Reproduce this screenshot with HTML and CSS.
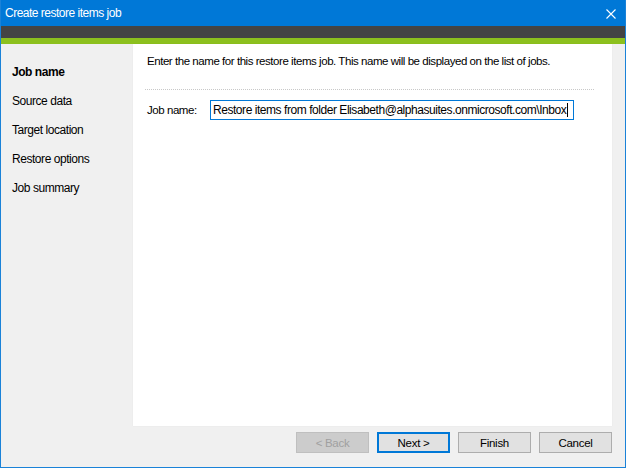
FILE: index.html
```html
<!DOCTYPE html>
<html>
<head>
<meta charset="utf-8">
<link rel="stylesheet" href="styles.css">
</head>
<body>
<div class="window">
  <div class="titlebar">
    <span class="title">Create restore items job</span>
    <svg class="close" width="10" height="10" viewBox="0 0 10 10"><path d="M0.5 0.5 L9.5 9.5 M9.5 0.5 L0.5 9.5" stroke="#fff" stroke-width="1.1" fill="none"/></svg>
  </div>
  <div class="darkbar"></div>
  <div class="greenbar"></div>
  <div class="main">
    <ul class="nav">
      <li class="active">Job name</li>
      <li>Source data</li>
      <li>Target location</li>
      <li>Restore options</li>
      <li>Job summary</li>
    </ul>
    <div class="panel">
      <p class="intro">Enter the name for this restore items job. This name will be displayed on the list of jobs.</p>
      <div class="sep"></div>
      <div class="field">
        <label class="label">Job name:</label>
        <div class="input">Restore items from folder Elisabeth@alphasuites.onmicrosoft.com\Inbox<span class="caret"></span></div>
      </div>
    </div>
  </div>
  <div class="footer">
    <button class="btn disabled">&lt; Back</button>
    <button class="btn default">Next &gt;</button>
    <button class="btn">Finish</button>
    <button class="btn">Cancel</button>
  </div>
</div>
</body>
</html>
```
FILE: styles.css
```css
html, body {
  margin: 0;
  padding: 0;
}
body {
  font-family: "Liberation Sans", Arial, sans-serif;
  font-size: 11.5px;
  letter-spacing: -0.45px;
  color: #000;
}
.window {
  width: 626px;
  height: 468px;
  box-sizing: border-box;
  border: 1px solid #1a82d8;
  border-top: none;
  background: #f0f0f0;
  display: flex;
  flex-direction: column;
  overflow: hidden;
}
.titlebar {
  height: 26px;
  margin: 0 -1px;
  background: #0078d7;
  display: flex;
  align-items: center;
  justify-content: space-between;
  padding: 0 10px 0 5px;
  color: #fff;
  flex: none;
}
.title {
  font-size: 12px;
  letter-spacing: -0.5px;
}
.close {
  display: block;
  margin-top: 1px;
}
.darkbar {
  height: 12px;
  background: #444444;
  flex: none;
}
.greenbar {
  height: 6px;
  background: #8cc01e;
  flex: none;
}
.main {
  display: flex;
  height: 382px;
  flex: none;
}
.nav {
  list-style: none;
  margin: 0;
  padding: 14px 0 0 11px;
  width: 121px;
  font-size: 12px;
}
.nav li {
  height: 29px;
  line-height: 29px;
}
.nav li.active {
  font-weight: bold;
}
.panel {
  width: 479px;
  background: #fff;
  box-shadow: 0 0 1px rgba(0,0,0,0.08);
  padding: 0;
}
.intro {
  margin: 10px 0 0 14px;
  line-height: 15px;
}
.sep {
  margin: 20px 18px 0 12px;
  border-top: 1px dotted #c8c8c8;
  height: 0;
}
.field {
  display: flex;
  align-items: center;
  margin: 10px 0 0 14px;
}
.label {
  width: 63px;
}
.input {
  box-sizing: border-box;
  width: 364px;
  height: 20px;
  border: 1px solid #0078d7;
  padding: 0 0 0 2px;
  line-height: 18px;
  font-size: 12px;
  letter-spacing: -0.45px;
  white-space: nowrap;
  overflow: hidden;
  display: flex;
  align-items: center;
}
.caret {
  display: inline-block;
  width: 1px;
  height: 14px;
  background: #000;
  margin-left: 1px;
}
.footer {
  display: flex;
  gap: 8px;
  padding: 6px 0 0 295px;
}
.btn {
  width: 73px;
  height: 21px;
  box-sizing: border-box;
  border: 1px solid #adadad;
  background: #e1e1e1;
  font-family: "Liberation Sans", Arial, sans-serif;
  font-size: 11.5px;
  letter-spacing: -0.3px;
  color: #000;
  padding: 1px 0 0;
  margin: 0;
}
.btn.default {
  border: 2px solid #0078d7;
}
.btn.disabled {
  color: #a0a0a0;
  background: #cccccc;
  border-color: #bfbfbf;
}
```
